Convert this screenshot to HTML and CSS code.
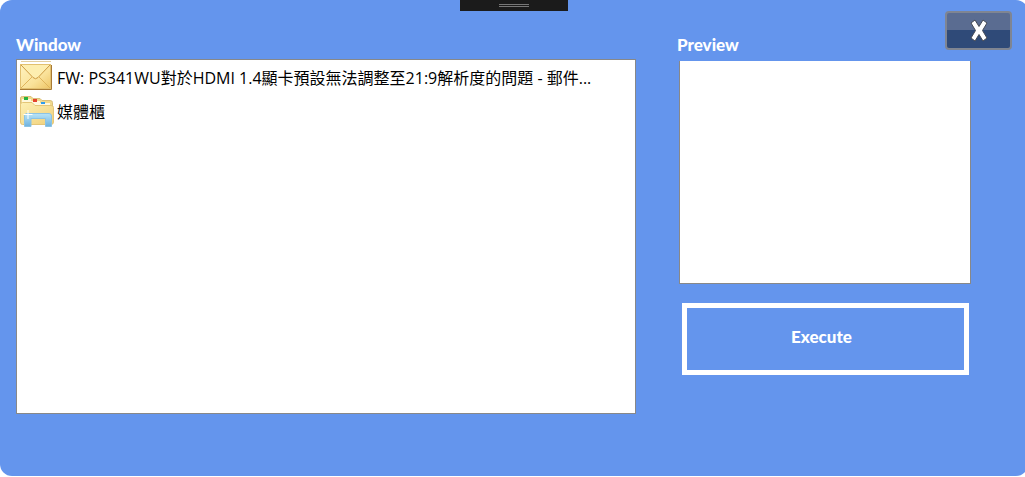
FILE: index.html
```html
<!DOCTYPE html>
<html lang="zh-Hant">
<head>
<meta charset="utf-8">
<title>Window</title>
<link rel="stylesheet" href="styles.css">
</head>
<body>
<main class="panel">
  <div class="handle"><span class="grip"></span></div>
  <button class="close" type="button" aria-label="Close">
    <svg width="18" height="23" viewBox="0 0 18 23"><path d="M1 4L5 1L9 7.500L13 1L17 4L12.500 11.500L17 19L13 22L9 15.500L5 22L1 19L5.500 11.500Z" fill="#fff" stroke="#454a55" stroke-width="1" stroke-linejoin="round"/></svg>
  </button>
  <div class="content">
    <section class="windows">
      <h2 class="title" id="window-title">Window</h2>
      <ul class="list" aria-labelledby="window-title">
        <li class="item">
          <svg class="icon" viewBox="0 0 36 34">
            <defs>
              <linearGradient id="mail" x1="0" y1="0" x2="1" y2="1"><stop offset="0" stop-color="#fff3c0"/><stop offset=".6" stop-color="#fae29a"/><stop offset="1" stop-color="#eec566"/></linearGradient>
            </defs>
            <path d="M2 .5H32" stroke="#e3cfa0"/>
            <rect x="1.500" y="3.500" width="30" height="24" fill="url(#mail)" stroke="#e2c070"/>
            <path d="M2 27L13 16M31 27L20 16" stroke="#dfb45c" fill="none"/>
            <path d="M2 4L14 16.500Q16.500 19 19 16.500L31 4Z" fill="#fdeeb0"/>
            <path d="M2 4L14 16.500Q16.500 19 19 16.500L31 4" stroke="#cc9a42" fill="none"/>
            <path d="M1 28.500H32.500V4" stroke="#a87a35" fill="none"/>
          </svg>
          <span class="name">FW: PS341WU對於HDMI 1.4顯卡預設無法調整至21:9解析度的問題 - 郵件...</span>
        </li>
        <li class="item">
          <svg class="icon" viewBox="0 0 36 34">
            <defs>
              <linearGradient id="folder" x1="0" y1="0" x2="1" y2="1"><stop offset="0" stop-color="#fdf0b4"/><stop offset="1" stop-color="#f0d07a"/></linearGradient>
              <linearGradient id="stand" x1="0" y1="0" x2="0" y2="1"><stop offset="0" stop-color="#b9e4f7"/><stop offset="1" stop-color="#6fb2de"/></linearGradient>
            </defs>
            <path d="M1.500 25V3Q1.500 1.500 3.500 1.500H12L14 3.500H21L23 5.500H31Q33.500 5.500 33.500 7.500V28H3Z" fill="#f1d98c" stroke="#d9bf7c"/>
            <path d="M3 4H12V9H3ZM12 6H21V11H12ZM21 8H31V12H21Z" fill="#fff8dc"/>
            <path d="M5 2H9V5H5Z" fill="#26b33e"/>
            <path d="M14 4H18V7H14Z" fill="#e5432d"/>
            <path d="M22 7H26V9H22Z" fill="#2f9cee"/>
            <path d="M1.500 9.500Q1.500 7.500 3.500 7.500H13L16 10.500H32Q34.500 10.500 34.500 12.500V27Q34.500 29.500 32 29.500H3.500Q1.500 29.500 1.500 27Z" fill="url(#folder)" stroke="#e4c678"/>
            <path d="M5.500 31.500V21Q5.500 18.500 8 18.500H30Q32.500 18.500 32.500 21V31.500H26.500V23.500H12V31.500Z" fill="url(#stand)" stroke="#8cc3e4"/>
            <path d="M9 15V24M4.500 19.500H13.500" stroke="#fff"/>
          </svg>
          <span class="name">媒體櫃</span>
        </li>
      </ul>
    </section>
    <section class="side">
      <h2 class="title">Preview</h2>
      <div class="preview"></div>
      <button class="execute" type="button">Execute</button>
    </section>
  </div>
</main>
</body>
</html>
```
FILE: styles.css
```css
* { box-sizing: border-box; }
body {
  margin: 0;
  background: #fff;
  overflow: hidden;
  font-family: "Open Sans", "Noto Sans CJK TC", sans-serif;
}
.panel {
  position: relative;
  width: calc(100% + 3px);
  min-height: calc(100vh - 1px);
  background: #6495ed;
  border-radius: 12px;
  display: flex;
  flex-direction: column;
}
.handle {
  width: 108px;
  height: 11px;
  margin: 0 auto;
  background: #1b1b1b;
  display: flex;
  align-items: center;
  justify-content: center;
}
.grip {
  width: 30px;
  height: 3px;
  border-top: 1px solid #777;
  border-bottom: 1px solid #777;
}
.close {
  position: absolute;
  top: 11px;
  right: 16px;
  width: 67px;
  height: 39px;
  padding: 0;
  border: 2px solid #7f8592;
  border-radius: 4px;
  background: linear-gradient(#5a6c91 0 50%, #2f4a78 50% 100%);
  display: flex;
  align-items: center;
  justify-content: center;
}
.content {
  flex: 1;
  display: grid;
  grid-template-columns: 620fr 294fr;
  gap: 41px;
  padding: 24px 57px 62px 16px;
}
.windows, .side {
  display: flex;
  flex-direction: column;
}
.title {
  margin: 0;
  height: 24px;
  font: 900 17px/20px Lato, sans-serif;
  color: #fff;
}
.list {
  flex: 1;
  margin: 0;
  padding: 1px 2px;
  list-style: none;
  background: #fff;
  border: 1px solid #888;
}
.item {
  display: flex;
  align-items: center;
  gap: 2px;
  height: 34px;
}
.icon {
  width: 36px;
  height: 34px;
  flex: none;
}
.name {
  font-size: 16px;
  font-weight: 400;
  line-height: 24px;
  color: #000;
  white-space: nowrap;
  overflow: hidden;
  text-overflow: ellipsis;
}
.preview {
  height: 223px;
  margin: 2px 0 0 2px;
  background: #fff;
  border: 1px solid #888;
  border-top: 0;
}
.execute {
  height: 72px;
  margin: 19px 2px 0 5px;
  padding: 0 8px 4px 0;
  border: 5px solid #fff;
  background: #6495ed;
  color: #fff;
  font: 900 17px/20px Lato, sans-serif;
}
```
